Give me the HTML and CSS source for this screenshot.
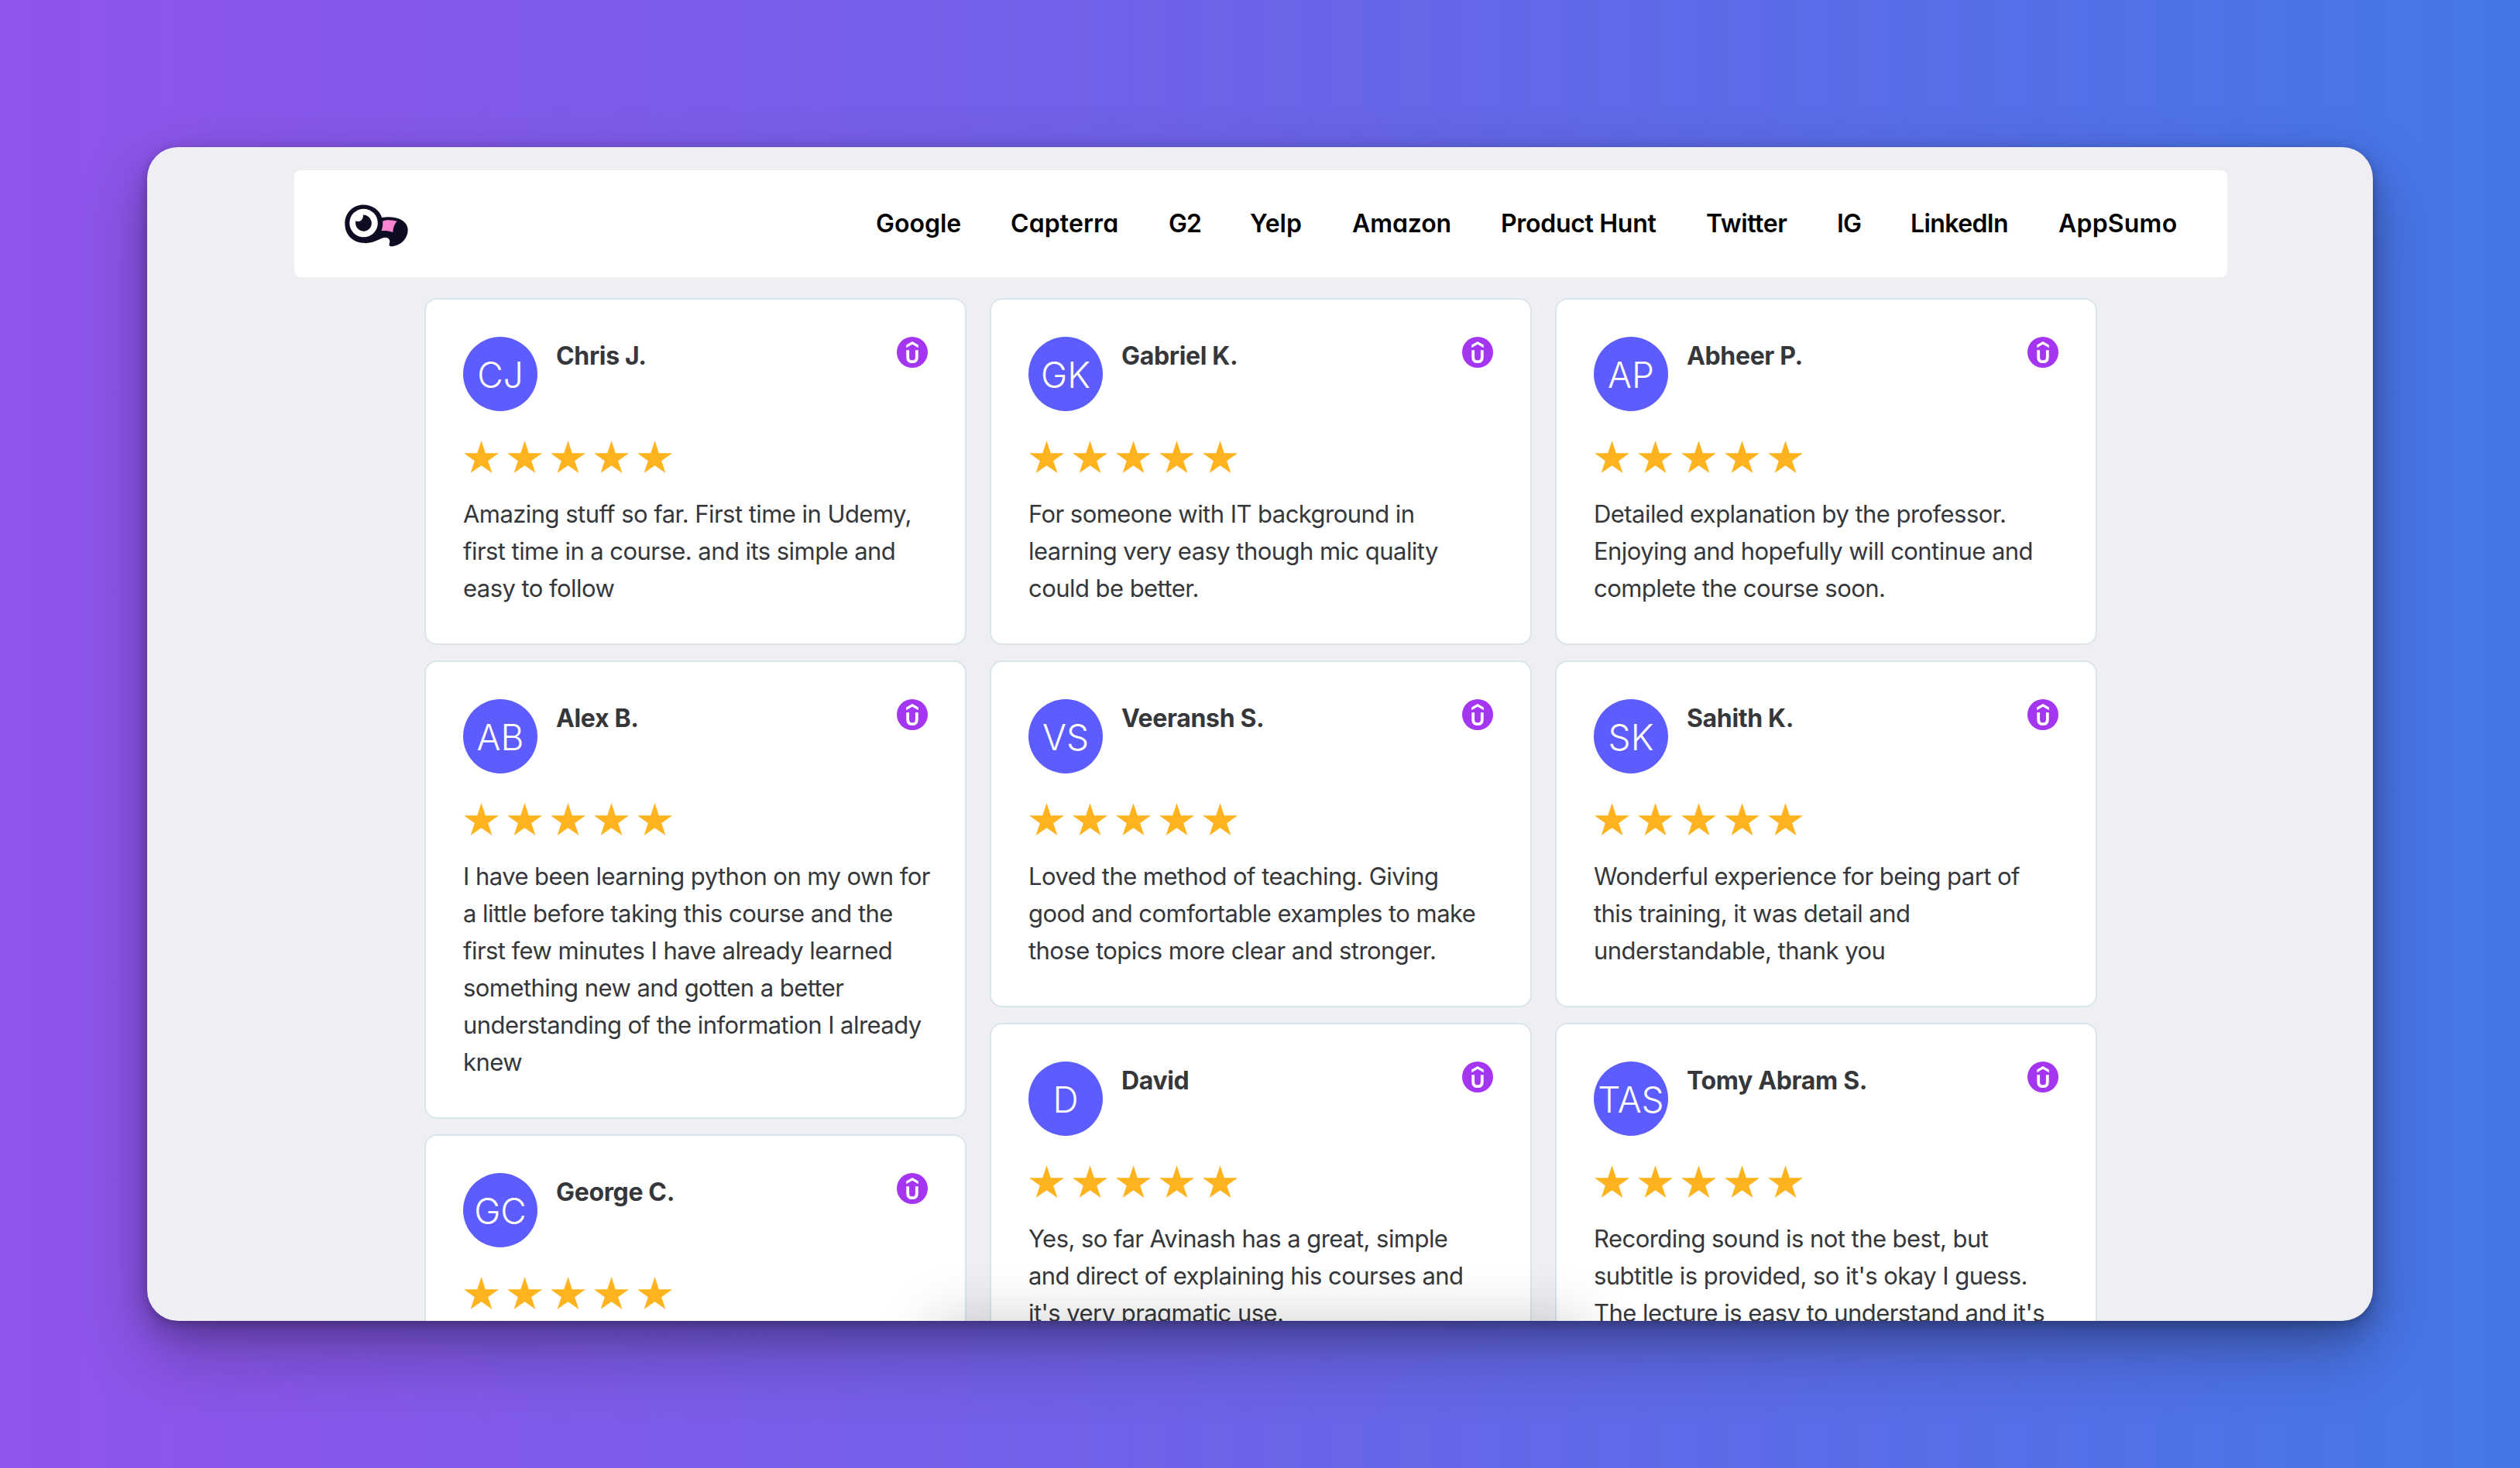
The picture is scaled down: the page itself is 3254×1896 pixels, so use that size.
FILE: index.html
```html
<!DOCTYPE html>
<html lang="en">
<head>
<meta charset="utf-8">
<title>Reviews</title>
<link rel="stylesheet" href="styles.css">
</head>
<body>
<svg class="sprite" aria-hidden="true">
  <symbol id="stars" viewBox="0 0 272 48">
    <g fill="#ffb41f">
      <path id="star" d="M23.5 2.2 L28.8 18.3 L46 18.3 L32.2 28.3 L37.4 44.1 L23.5 34.3 L9.6 44.1 L14.8 28.3 L1 18.3 L18.2 18.3Z"/>
      <use href="#star" x="56"/><use href="#star" x="112"/><use href="#star" x="168"/><use href="#star" x="224"/>
    </g>
  </symbol>
  <symbol id="udemy" viewBox="0 0 40 40">
    <circle cx="20" cy="20" r="20" fill="#a435f0"/>
    <path d="M12.2 10.5 L20 6 L27.8 10.5 V14.2 L20 9.8 L12.2 14.2Z" fill="#fff"/>
    <path d="M14.2 17.3 V26.4 C14.2 30.5 16.3 32.2 20 32.2 S25.8 30.5 25.8 26.4 V17.3" fill="none" stroke="#fff" stroke-width="3.8"/>
  </symbol>
</svg>
<main class="window">
  <nav class="nav">
    <svg class="logo" viewBox="75 71 247 165">
      <path d="M148 72 C182 72 211 92 220 122 C265 113 321 128 321 170 C321 205 291 232 258 234 C248 235 247 229 249 223 C253 212 250 204 239 200 C215 197 200 221 157 221 C108 221 76 190 76 145 C76 103 108 72 148 72Z" fill="#0d0c22"/>
      <circle cx="149" cy="143" r="55" fill="#fff"/>
      <path d="M118 135 C127 140 148 137 147 111 C168 112 180 128 180 143 C180 161 167 175 149 175 C129 175 114 157 118 135Z" fill="#0d0c22"/>
      <path d="M223 136 C239 129 258 131 279 136 C267 149 263 164 263 179 C248 174 235 173 218 173 C223 160 224 149 223 136Z" fill="#ff84cf"/>
    </svg>
    <div class="links">
      <a class="l-google">Google</a><a class="l-capterra">Capterra</a><a class="l-g2">G2</a><a class="l-yelp">Yelp</a><a class="l-amazon">Amazon</a><a class="l-ph">Product Hunt</a><a class="l-twitter">Twitter</a><a class="l-ig">IG</a><a class="l-linkedin">LinkedIn</a><a class="l-appsumo">AppSumo</a>
    </div>
  </nav>
  <section class="columns">
    <div class="column">
      <article class="card">
        <header><span class="avatar">CJ</span><h3>Chris J.</h3><svg class="source"><use href="#udemy"/></svg></header>
        <svg class="stars"><use href="#stars"/></svg>
        <p>Amazing stuff so far. First time in Udemy,<br>first time in a course. and its simple and<br>easy to follow</p>
      </article>
      <article class="card">
        <header><span class="avatar">AB</span><h3>Alex B.</h3><svg class="source"><use href="#udemy"/></svg></header>
        <svg class="stars"><use href="#stars"/></svg>
        <p>I have been learning python on my own for<br>a little before taking this course and the<br>first few minutes I have already learned<br>something new and gotten a better<br>understanding of the information I already<br>knew</p>
      </article>
      <article class="card">
        <header><span class="avatar">GC</span><h3>George C.</h3><svg class="source"><use href="#udemy"/></svg></header>
        <svg class="stars"><use href="#stars"/></svg>
      </article>
    </div>
    <div class="column">
      <article class="card">
        <header><span class="avatar">GK</span><h3>Gabriel K.</h3><svg class="source"><use href="#udemy"/></svg></header>
        <svg class="stars"><use href="#stars"/></svg>
        <p>For someone with IT background in<br>learning very easy though mic quality<br>could be better.</p>
      </article>
      <article class="card">
        <header><span class="avatar">VS</span><h3>Veeransh S.</h3><svg class="source"><use href="#udemy"/></svg></header>
        <svg class="stars"><use href="#stars"/></svg>
        <p>Loved the method of teaching. Giving<br>good and comfortable examples to make<br>those topics more clear and stronger.</p>
      </article>
      <article class="card">
        <header><span class="avatar">D</span><h3>David</h3><svg class="source"><use href="#udemy"/></svg></header>
        <svg class="stars"><use href="#stars"/></svg>
        <p>Yes, so far Avinash has a great, simple<br>and direct of explaining his courses and<br>it's very pragmatic use.</p>
      </article>
    </div>
    <div class="column">
      <article class="card">
        <header><span class="avatar">AP</span><h3>Abheer P.</h3><svg class="source"><use href="#udemy"/></svg></header>
        <svg class="stars"><use href="#stars"/></svg>
        <p>Detailed explanation by the professor.<br>Enjoying and hopefully will continue and<br>complete the course soon.</p>
      </article>
      <article class="card">
        <header><span class="avatar">SK</span><h3>Sahith K.</h3><svg class="source"><use href="#udemy"/></svg></header>
        <svg class="stars"><use href="#stars"/></svg>
        <p>Wonderful experience for being part of<br>this training, it was detail and<br>understandable, thank you</p>
      </article>
      <article class="card">
        <header><span class="avatar">TAS</span><h3>Tomy Abram S.</h3><svg class="source"><use href="#udemy"/></svg></header>
        <svg class="stars"><use href="#stars"/></svg>
        <p>Recording sound is not the best, but<br>subtitle is provided, so it's okay I guess.<br>The lecture is easy to understand and it's</p>
      </article>
    </div>
  </section>
  <div class="fade"></div>
</main>
</body>
</html>
```
FILE: styles.css
```css
* { box-sizing: border-box; }
body {
  margin: 0;
  height: 1896px;
  padding: 190px;
  overflow: hidden;
  background: linear-gradient(90deg, #9054ea 0%, #6f62e8 45%, #4577e7 100%);
  font-family: Inter, "Liberation Sans", sans-serif;
  color: #35373b;
}
.sprite { position: absolute; width: 0; height: 0; }
.window {
  position: relative;
  width: 2874px;
  height: 1516px;
  padding-top: 30px;
  overflow: hidden;
  border-radius: 40px;
  background: #efeff3;
  box-shadow: 0 40px 90px rgba(0, 0, 0, .28), 0 14px 34px rgba(0, 0, 0, .2), 0 3px 12px rgba(0, 0, 0, .18);
}
.nav {
  width: 2496px;
  height: 138px;
  margin: 0 auto 27px 190px;
  padding: 0 64px;
  display: flex;
  align-items: center;
  justify-content: space-between;
  border-radius: 8px;
  background: #fff;
}
.logo { width: 82px; height: 55px; margin: 4px 0 0 1px; }
.links {
  display: flex;
  gap: 64px;
  margin-right: 1px;
  font-size: 32px;
  font-weight: 600;
  line-height: 48px;
  color: #000;
  font-feature-settings: "cv11";
  white-space: nowrap;
}
.l-google { width: 110px; letter-spacing: 0; }
.l-capterra { width: 140px; letter-spacing: .1px; }
.l-g2 { width: 41px; letter-spacing: -.9px; }
.l-yelp { width: 68px; letter-spacing: 0; }
.l-amazon { width: 128px; letter-spacing: -.1px; }
.l-ph { width: 201px; letter-spacing: -.3px; }
.l-twitter { width: 105px; letter-spacing: -.4px; }
.l-ig { width: 31px; letter-spacing: -.9px; }
.l-linkedin { width: 127px; letter-spacing: -.6px; }
.l-appsumo { width: 153px; letter-spacing: .2px; }
.columns { display: flex; gap: 30px; padding-left: 358px; align-items: flex-start; }
.column { width: 700px; display: flex; flex-direction: column; gap: 20px; }
.card {
  padding: 48px;
  border: 2px solid #d9e4eb;
  border-radius: 16px;
  background: #fff;
}
.card header { display: flex; height: 96px; }
.avatar {
  width: 96px;
  height: 96px;
  border-radius: 50%;
  background: #5d5cff;
  color: #fff;
  font-size: 46px;
  font-weight: 350;
  line-height: 98px;
  text-align: center;
}
.card h3 {
  flex: 1;
  margin: 0 0 0 24px;
  font-size: 32px;
  font-weight: 700;
  line-height: 50px;
  letter-spacing: -.35px;
}
.source { width: 40px; height: 40px; }
.stars { display: block; width: 272px; height: 48px; margin: 36px 0 25px; }
.card p {
  margin: 0 0 -1px;
  font-size: 31px;
  line-height: 48px;
  letter-spacing: -.55px;
  white-space: nowrap;
}
/* soft shadow rising from the bottom edge */
.fade {
  position: absolute;
  left: 1015px;
  top: 100%;
  width: 840px;
  height: 200px;
  border-radius: 20px;
  box-shadow: 0 0 76px rgba(0, 0, 0, .2);
}
```
